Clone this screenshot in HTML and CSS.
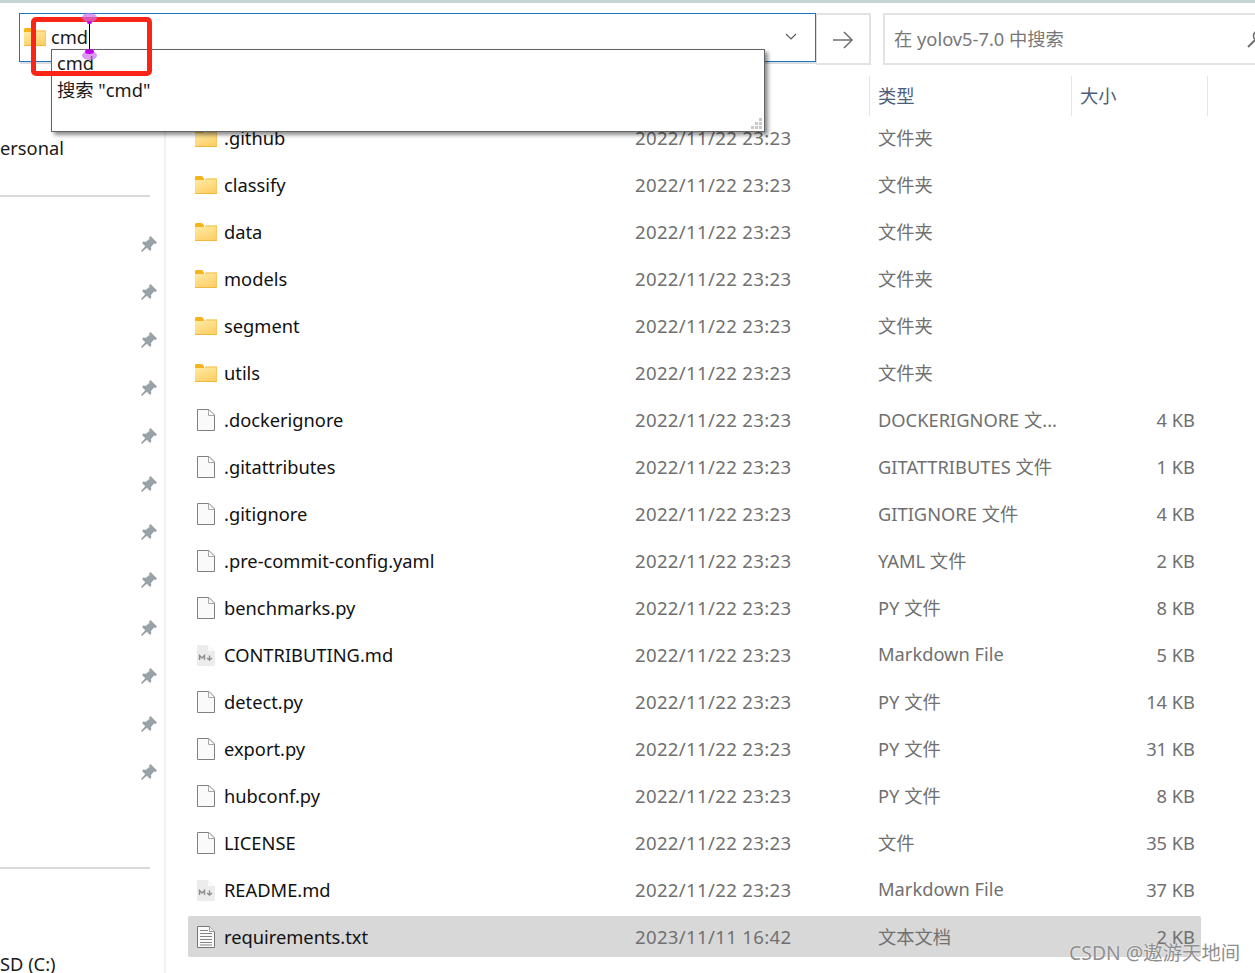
FILE: index.html
```html
<!DOCTYPE html>
<html>
<head>
<meta charset="utf-8">
<title>yolov5-7.0</title>
<link rel="stylesheet" href="styles.css">
</head>
<body>
<svg class="defs" width="0" height="0">
  <defs>
    <linearGradient id="folder-fill" x1="0" y1="0" x2="0.5" y2="1">
      <stop offset="0" stop-color="#ffeca6"/>
      <stop offset="1" stop-color="#fdd06a"/>
    </linearGradient>
    <symbol id="i-folder" viewBox="0 0 22 18">
      <path d="M0 1.500C0 .500.700 0 1.500 0H7l2 2.500v3H0z" fill="#f6b41a"/>
      <path d="M0 4h9l1.500-1.500H22V18H0z" fill="url(#folder-fill)"/>
      <path d="M10.500 2.500H22v1H10z" fill="#f4bf4c"/>
      <path d="M0 17h22v1H0z" fill="#f2b83c"/>
      <path d="M21 3.500h1V17h-1z" fill="#f7c860"/>
    </symbol>
    <symbol id="i-file" viewBox="0 0 18 22">
      <path d="M.5.500h11.500l5.500 5.500v15.500H.5z" fill="#fafafa" stroke="#808080"/>
      <path d="M11.500.500v6h6" fill="none" stroke="#a8a8a8"/>
    </symbol>
    <symbol id="i-md" viewBox="0 0 18 22">
      <path d="M0 1h11l7 6v14l-1 1H1l-1-1z" fill="#ececec"/>
      <path d="M11 1v6h7z" fill="#fafafa"/>
      <path d="M2.500 16v-4.500l2.500 2.500 2.500-2.500V16M12.500 11.500V16m-2.500-2 2.500 2 2.500-2" fill="none" stroke="#8e8e8e" stroke-width="1.400"/>
    </symbol>
    <symbol id="i-txt" viewBox="0 0 18 22">
      <path d="M.5.500h12l5 5v16H.5z" fill="#fafafa" stroke="#777"/>
      <path d="M12.500.500v5h5" fill="#eee" stroke="#999"/>
      <path d="M3 4.500h8M3 7.500h12M3 10.500h12M3 13.500h12M3 16.500h12M3 19h12" stroke="#858585"/>
    </symbol>
    <symbol id="i-pin" viewBox="0 0 16 16">
      <path d="M9.500 0 16 6.500l-1.500 1.500-1.500-.5-3 3.500.3 2.500L9 15l-3.200-3.200L1 16l-1-1 4.200-4.800L1 7l1.500-1.500 2.500.3 3.500-3-.5-1.300z" fill="#98a2a8"/>
    </symbol>
  </defs>
</svg>

<div class="window">
  <div class="toolbar">
    <div class="address">
      <svg class="address-folder"><use href="#i-folder"/></svg>
      <span class="address-text">cmd</span>
      <svg class="chevron" width="12" height="7" viewBox="0 0 12 7"><path d="M1 1l5 5 5-5" fill="none" stroke="#5c5c5c" stroke-width="1.200"/></svg>
    </div>
    <div class="go">
      <svg width="22" height="20" viewBox="0 0 22 20"><path d="M1 10h19M12 2l8 8-8 8" fill="none" stroke="#6f6f6f" stroke-width="1.500"/></svg>
    </div>
    <div class="search">
      <span>在 yolov5-7.0 中搜索</span>
      <svg class="search-icon" width="20" height="20" viewBox="0 0 20 20"><circle cx="12" cy="7" r="5.500" fill="none" stroke="#6f6f6f" stroke-width="1.500"/><path d="M8 11l-7 7" stroke="#6f6f6f" stroke-width="2"/></svg>
    </div>
  </div>

  <div class="content">
    <aside class="sidebar">
      <div class="nav-label nav-personal">ersonal</div>
      <div class="nav-rule"></div>
      <ul class="pins">
        <li><svg class="pin"><use href="#i-pin"/></svg></li>
        <li><svg class="pin"><use href="#i-pin"/></svg></li>
        <li><svg class="pin"><use href="#i-pin"/></svg></li>
        <li><svg class="pin"><use href="#i-pin"/></svg></li>
        <li><svg class="pin"><use href="#i-pin"/></svg></li>
        <li><svg class="pin"><use href="#i-pin"/></svg></li>
        <li><svg class="pin"><use href="#i-pin"/></svg></li>
        <li><svg class="pin"><use href="#i-pin"/></svg></li>
        <li><svg class="pin"><use href="#i-pin"/></svg></li>
        <li><svg class="pin"><use href="#i-pin"/></svg></li>
        <li><svg class="pin"><use href="#i-pin"/></svg></li>
        <li><svg class="pin"><use href="#i-pin"/></svg></li>
      </ul>
      <div class="nav-rule nav-rule-low"></div>
      <div class="nav-label nav-drive">SD (C:)</div>
    </aside>

    <main class="files">
      <div class="headers">
        <div class="head head-type">类型</div>
        <div class="head head-size">大小</div>
        <div class="head head-end"></div>
      </div>
      <div class="list">
        <div class="row"><svg class="icon folder"><use href="#i-folder"/></svg><span class="name">.github</span><span class="date">2022/11/22 23:23</span><span class="type">文件夹</span><span class="size"></span></div>
        <div class="row"><svg class="icon folder"><use href="#i-folder"/></svg><span class="name">classify</span><span class="date">2022/11/22 23:23</span><span class="type">文件夹</span><span class="size"></span></div>
        <div class="row"><svg class="icon folder"><use href="#i-folder"/></svg><span class="name">data</span><span class="date">2022/11/22 23:23</span><span class="type">文件夹</span><span class="size"></span></div>
        <div class="row"><svg class="icon folder"><use href="#i-folder"/></svg><span class="name">models</span><span class="date">2022/11/22 23:23</span><span class="type">文件夹</span><span class="size"></span></div>
        <div class="row"><svg class="icon folder"><use href="#i-folder"/></svg><span class="name">segment</span><span class="date">2022/11/22 23:23</span><span class="type">文件夹</span><span class="size"></span></div>
        <div class="row"><svg class="icon folder"><use href="#i-folder"/></svg><span class="name">utils</span><span class="date">2022/11/22 23:23</span><span class="type">文件夹</span><span class="size"></span></div>
        <div class="row"><svg class="icon file"><use href="#i-file"/></svg><span class="name">.dockerignore</span><span class="date">2022/11/22 23:23</span><span class="type">DOCKERIGNORE 文...</span><span class="size">4 KB</span></div>
        <div class="row"><svg class="icon file"><use href="#i-file"/></svg><span class="name">.gitattributes</span><span class="date">2022/11/22 23:23</span><span class="type">GITATTRIBUTES 文件</span><span class="size">1 KB</span></div>
        <div class="row"><svg class="icon file"><use href="#i-file"/></svg><span class="name">.gitignore</span><span class="date">2022/11/22 23:23</span><span class="type">GITIGNORE 文件</span><span class="size">4 KB</span></div>
        <div class="row"><svg class="icon file"><use href="#i-file"/></svg><span class="name">.pre-commit-config.yaml</span><span class="date">2022/11/22 23:23</span><span class="type">YAML 文件</span><span class="size">2 KB</span></div>
        <div class="row"><svg class="icon file"><use href="#i-file"/></svg><span class="name">benchmarks.py</span><span class="date">2022/11/22 23:23</span><span class="type">PY 文件</span><span class="size">8 KB</span></div>
        <div class="row"><svg class="icon file"><use href="#i-md"/></svg><span class="name">CONTRIBUTING.md</span><span class="date">2022/11/22 23:23</span><span class="type">Markdown File</span><span class="size">5 KB</span></div>
        <div class="row"><svg class="icon file"><use href="#i-file"/></svg><span class="name">detect.py</span><span class="date">2022/11/22 23:23</span><span class="type">PY 文件</span><span class="size">14 KB</span></div>
        <div class="row"><svg class="icon file"><use href="#i-file"/></svg><span class="name">export.py</span><span class="date">2022/11/22 23:23</span><span class="type">PY 文件</span><span class="size">31 KB</span></div>
        <div class="row"><svg class="icon file"><use href="#i-file"/></svg><span class="name">hubconf.py</span><span class="date">2022/11/22 23:23</span><span class="type">PY 文件</span><span class="size">8 KB</span></div>
        <div class="row"><svg class="icon file"><use href="#i-file"/></svg><span class="name">LICENSE</span><span class="date">2022/11/22 23:23</span><span class="type">文件</span><span class="size">35 KB</span></div>
        <div class="row"><svg class="icon file"><use href="#i-md"/></svg><span class="name">README.md</span><span class="date">2022/11/22 23:23</span><span class="type">Markdown File</span><span class="size">37 KB</span></div>
        <div class="row selected"><svg class="icon file"><use href="#i-txt"/></svg><span class="name">requirements.txt</span><span class="date">2023/11/11 16:42</span><span class="type">文本文档</span><span class="size">2 KB</span></div>
      </div>
    </main>
  </div>

  <!-- autocomplete dropdown -->
  <div class="suggest">
    <div class="suggest-item">cmd</div>
    <div class="suggest-item">搜索 "cmd"</div>
    <svg class="grip" width="12" height="12" viewBox="0 0 12 12"><path d="M8 0h3v3H8zM4 4h3v3H4zM8 4h3v3H8zM0 8h3v3H0zM4 8h3v3H4zM8 8h3v3H8z" fill="#c9c9c9"/></svg>
  </div>

  <!-- red annotation, text cursor and drag handles from the screenshot tool -->
  <div class="redbox"></div>
  <div class="caret"></div>
  <div class="handle handle-top"></div>
  <div class="handle handle-bottom"></div>

  <div class="watermark">CSDN @遨游天地间</div>
</div>
</body>
</html>
```

FILE: styles.css
```css
* {
  box-sizing: border-box;
}

html, body {
  margin: 0;
  height: 100%;
  overflow: hidden;
  background: #fff;
}

body {
  font-family: "Noto Sans", "Noto Sans CJK SC", sans-serif;
  font-size: 18.3px;
  color: #1a1a1a;
}

.defs {
  position: absolute;
}

.window {
  position: relative;
  width: 1255px;
  height: 973px;
  overflow: hidden;
  border-top: 3px solid #c3d5d5;
}

/* Toolbar */
.toolbar {
  display: flex;
  height: 73px;
  padding: 10px 0 0 19px;
}

.address {
  display: flex;
  flex-shrink: 0;
  align-items: center;
  width: 797px;
  height: 49px;
  padding: 0 18px 2px 4px;
  border: 1px solid #1b77c3;
  box-shadow: 1px 2px 0 #dcdcdc;
}

.address-folder {
  width: 22px;
  height: 18px;
  margin-right: 5px;
}

.address-text {
  flex: 1;
}

.go {
  display: flex;
  flex-shrink: 0;
  align-items: center;
  justify-content: center;
  width: 55px;
  height: 52px;
  padding-top: 2px;
  border: 2px solid #e3e3e3;
  border-left: none;
}

.search {
  position: relative;
  display: flex;
  flex-shrink: 0;
  align-items: center;
  width: 385px;
  height: 52px;
  margin-left: 12px;
  padding: 0 0 3px 9px;
  border: 2px solid #e3e3e3;
  color: #777;
}

.search-icon {
  position: absolute;
  left: 362px;
  top: 14px;
}

/* Main area */
.content {
  display: flex;
}

.sidebar {
  width: 166px;
  height: 897px;
  flex-shrink: 0;
  border-right: 2px solid #f1f1f1;
}

.nav-label {
  line-height: 24px;
  white-space: nowrap;
}

.nav-personal {
  margin-top: 60px;
}

.nav-rule {
  width: 150px;
  height: 2px;
  margin-top: 35px;
  background: #d9d9d9;
}

.nav-rule-low {
  margin-top: 71px;
}

.nav-drive {
  margin-top: 85px;
  line-height: 20px;
}

.pins {
  list-style: none;
  margin: 23px 0 0;
  padding: 0;
}

.pins li {
  display: flex;
  justify-content: flex-end;
  height: 48px;
  padding: 16px 7px 0 0;
}

.pin {
  width: 16px;
  height: 16px;
}

.files {
  flex: 1;
  padding-left: 22px;
}

.headers {
  display: flex;
  height: 40px;
  margin-bottom: 1px;
  padding-left: 681px;
  color: #4c607a;
}

.head {
  display: flex;
  align-items: center;
  padding: 0 0 3px 8px;
  border-left: 1px solid #e5e5e5;
}

.head-type {
  width: 202px;
}

.head-size {
  width: 136px;
}

.head-end {
  width: 1px;
}

.list {
  display: flex;
  flex-direction: column;
  gap: 6px;
}

.row {
  display: grid;
  grid-template-columns: 29px 411px 243px 1fr 60px;
  align-items: center;
  width: 1013px;
  height: 41px;
  padding: 0 6px 0 7px;
  border-radius: 2px;
  white-space: nowrap;
}

.row.selected {
  background: #d8d8d8;
}

.icon {
  display: block;
}

.icon.folder {
  width: 22px;
  height: 18px;
}

.icon.file {
  width: 18px;
  height: 22px;
  margin-left: 2px;
}

.name {
  color: #111;
}

.date,
.type,
.size {
  color: #707070;
}

.date {
  font-size: 18.6px;
  letter-spacing: 0.32px;
}

.type {
  margin-top: -2px;
}

.size {
  text-align: right;
}

/* Autocomplete */
.suggest {
  position: absolute;
  left: 51px;
  top: 46px;
  width: 714px;
  height: 83px;
  padding: 0 5px;
  background: #fff;
  border: 1px solid #646464;
  box-shadow: 3px 3px 4px rgba(0, 0, 0, 0.45);
}

.suggest-item {
  height: 27px;
  line-height: 25px;
}

.grip {
  position: absolute;
  right: 1px;
  bottom: 1px;
}

.redbox {
  position: absolute;
  left: 31px;
  top: 14px;
  width: 121px;
  height: 59px;
  border: 5px solid #fa2417;
  border-radius: 5px;
}

.caret {
  position: absolute;
  left: 89px;
  top: 20px;
  width: 1px;
  height: 28px;
  background: #000;
}

.handle {
  position: absolute;
  left: 82px;
  width: 15px;
  height: 9px;
  border-radius: 50%;
  background: rgba(205, 110, 240, 0.7);
}

.handle::after {
  content: "";
  position: absolute;
  border-radius: 50%;
  background: #c400e8;
}

.handle-top {
  top: 10px;
}

.handle-top::after {
  left: 5px;
  top: 8px;
  width: 5px;
  height: 3px;
}

.handle-bottom {
  top: 48px;
}

.handle-bottom::after {
  left: 3px;
  top: -2px;
  width: 9px;
  height: 5px;
}

.watermark {
  position: absolute;
  left: 1069px;
  top: 937px;
  font-size: 19.4px;
  line-height: 26px;
  color: #8f8f8f;
  text-shadow: 0 0 2px #fff;
  white-space: nowrap;
}
```
